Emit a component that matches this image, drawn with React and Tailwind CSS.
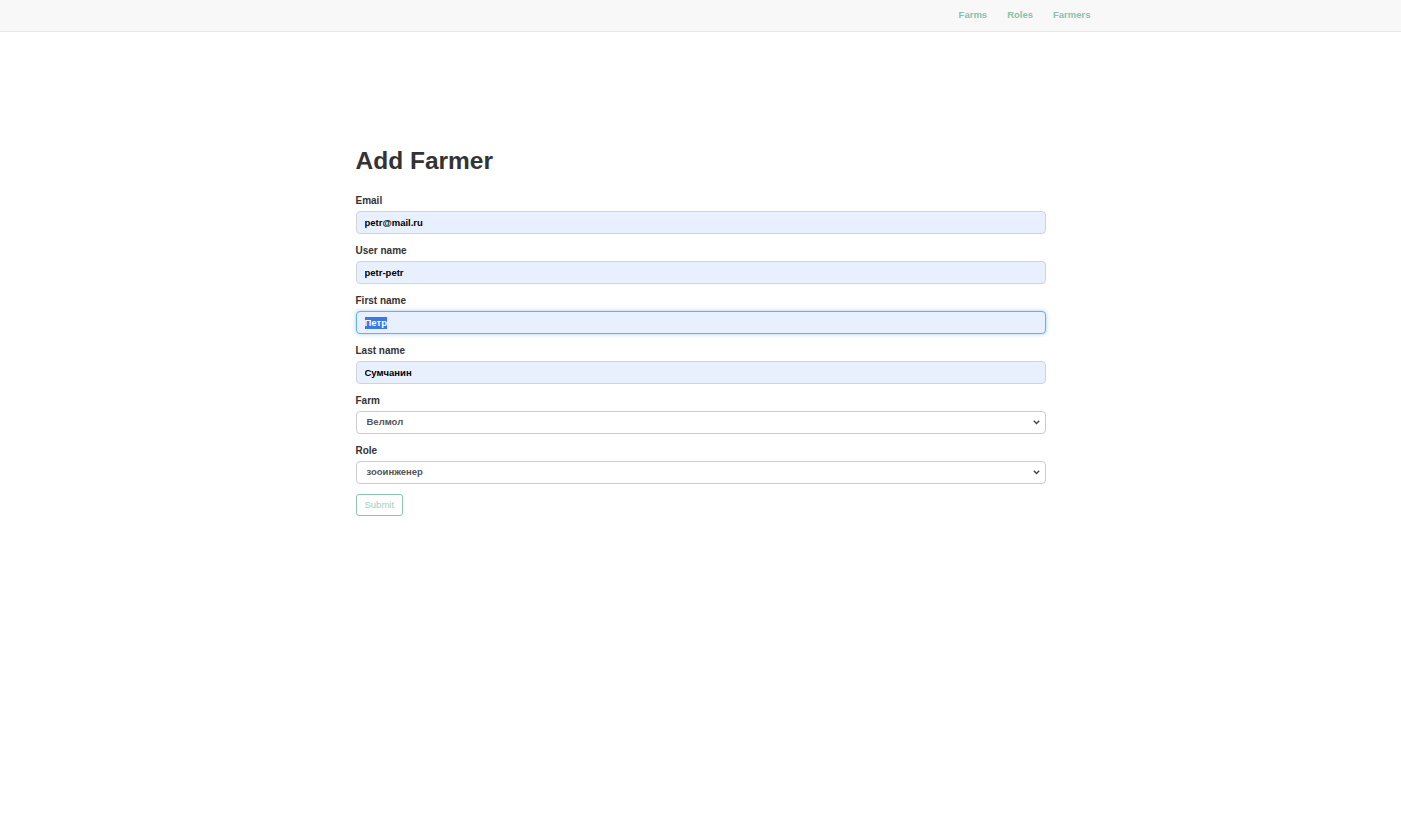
import React from 'react';

const font = { fontFamily: '"Liberation Sans", Arial, sans-serif' };

function Field({ label, value, focused }) {
    return (
        <div className="flex flex-col">
            <label className="text-[10px] font-bold text-[#333] leading-[15px] mb-[3px]">{label}</label>
            {focused ? (
                <div className="h-[23px] w-full rounded-[4px] border border-[#66afe9] bg-[#e8f0fe] px-[8px] flex items-center text-[9.5px] font-bold text-black shadow-[0_0_4px_rgba(102,175,233,0.6)]">
                    <span className="bg-[#3b78e7] text-white leading-[12px]">{value}</span>
                </div>
            ) : (
                <input
                    readOnly
                    value={value}
                    className="h-[23px] w-full rounded-[4px] border border-[#cfd4da] bg-[#e8f0fe] px-[8px] text-[9.5px] font-bold text-black outline-none"
                    style={font}
                />
            )}
        </div>
    );
}

function SelectField({ label, value }) {
    return (
        <div className="flex flex-col">
            <label className="text-[10px] font-bold text-[#333] leading-[15px] mb-[3px]">{label}</label>
            <div className="relative">
                <select
                    value={value}
                    onChange={() => {}}
                    className="appearance-none block h-[23px] w-full rounded-[4px] border border-[#cccccc] bg-white pl-[10px] pr-[20px] text-[9.5px] font-bold text-[#555] outline-none"
                    style={font}
                >
                    <option value={value}>{value}</option>
                </select>
                <svg
                    className="absolute right-[6px] top-[9px] pointer-events-none"
                    width="7"
                    height="5"
                    viewBox="0 0 7 5"
                    fill="none"
                >
                    <path d="M0.8 0.8 L3.5 3.6 L6.2 0.8" stroke="#444" strokeWidth="1.4" />
                </svg>
            </div>
        </div>
    );
}

export default function App() {
    return (
        <div className="min-h-[833px] bg-white" style={font}>
            <nav className="h-[32px] bg-[#f8f8f8] border-b border-[#e7e7e7]">
                <div className="w-[810px] mx-auto h-full flex justify-end items-center pr-[15px]">
                    <a href="#" className="text-[9.5px] font-bold text-[#86c2ae] ml-[20px]">Farms</a>
                    <a href="#" className="text-[9.5px] font-bold text-[#86c2ae] ml-[20px]">Roles</a>
                    <a href="#" className="text-[9.5px] font-bold text-[#86c2ae] ml-[20px]">Farmers</a>
                </div>
            </nav>

            <div className="w-[690px] mx-auto pt-[113px]">
                <h1 className="text-[24.5px] font-bold text-[#333] leading-[32px] mb-[16px]">Add Farmer</h1>
                <form className="flex flex-col gap-[9px]" onSubmit={(e) => e.preventDefault()}>
                    <Field label="Email" value="petr@mail.ru" />
                    <Field label="User name" value="petr-petr" />
                    <Field label="First name" value="Петр" focused />
                    <Field label="Last name" value="Сумчанин" />
                    <SelectField label="Farm" value="Велмол" />
                    <SelectField label="Role" value="зооинженер" />
                    <div className="flex mt-[1px]">
                        <button
                            type="submit"
                            className="h-[22px] px-[8px] rounded-[3px] border border-[#8cc6b3] bg-white text-[9.5px] text-[#9fcfc0]"
                            style={font}
                        >
                            Submit
                        </button>
                    </div>
                </form>
            </div>
        </div>
    );
}
